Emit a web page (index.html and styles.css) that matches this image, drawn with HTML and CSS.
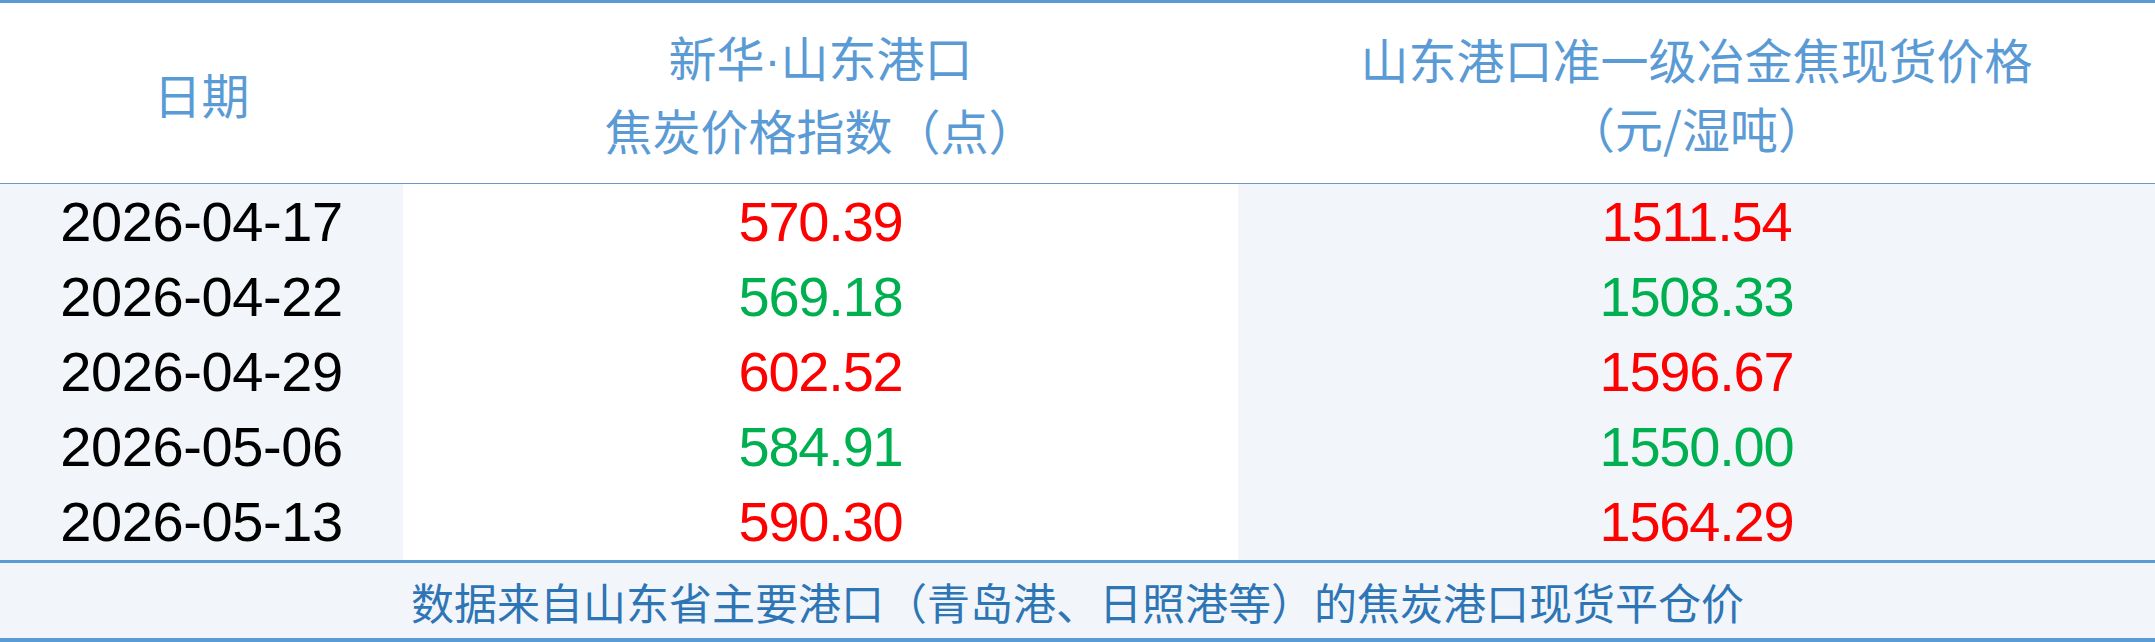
FILE: index.html
```html
<!DOCTYPE html>
<html lang="zh-CN">
<head>
<meta charset="utf-8">
<title>焦炭价格指数</title>
<link rel="stylesheet" href="styles.css">
</head>
<body>
<div class="sheet">
  <div class="head">
    <div class="hcell"><span>日期</span></div>
    <div class="hcell"><span>新华<span class="dot">·</span>山东港口</span><span>焦炭价格指数（点）</span></div>
    <div class="hcell"><span>山东港口准一级冶金焦现货价格</span><span>（元/湿吨）</span></div>
  </div>
  <div class="rows">
    <div class="row">
      <div class="cell date">2026-04-17</div>
      <div class="cell num up">570.39</div>
      <div class="cell num up shade">1511.54</div>
    </div>
    <div class="row">
      <div class="cell date">2026-04-22</div>
      <div class="cell num down">569.18</div>
      <div class="cell num down shade">1508.33</div>
    </div>
    <div class="row">
      <div class="cell date">2026-04-29</div>
      <div class="cell num up">602.52</div>
      <div class="cell num up shade">1596.67</div>
    </div>
    <div class="row">
      <div class="cell date">2026-05-06</div>
      <div class="cell num down">584.91</div>
      <div class="cell num down shade">1550.00</div>
    </div>
    <div class="row">
      <div class="cell date">2026-05-13</div>
      <div class="cell num up">590.30</div>
      <div class="cell num up shade">1564.29</div>
    </div>
  </div>
  <div class="foot">数据来自山东省主要港口（青岛港、日照港等）的焦炭港口现货平仓价</div>
</div>
</body>
</html>
```

FILE: styles.css
```css
html, body {
  margin: 0;
  padding: 0;
  background: #ffffff;
}

.sheet {
  width: 2155px;
  height: 642px;
  box-sizing: border-box;
  border-top: 3px solid #5b9bd5;
  border-bottom: 4px solid #5b9bd5;
  display: flex;
  flex-direction: column;
  font-family: "Noto Sans CJK SC", "Liberation Sans", sans-serif;
}

.head {
  height: 180px;
  display: grid;
  grid-template-columns: 403px 835px 1fr;
  border-bottom: 1px solid #6f97c6;
  background: #ffffff;
}

.hcell {
  display: flex;
  flex-direction: column;
  align-items: center;
  justify-content: center;
  color: #5b9bd5;
  font-size: 48px;
  line-height: 69px;
  white-space: nowrap;
}

.dot {
  font-family: "Liberation Sans", sans-serif;
}

.rows {
  height: 376px;
  display: grid;
  grid-template-rows: repeat(5, 1fr);
}

.row {
  display: grid;
  grid-template-columns: 403px 835px 1fr;
}

.cell {
  display: flex;
  align-items: center;
  justify-content: center;
  font-family: "Liberation Sans", "Noto Sans CJK SC", sans-serif;
  font-size: 56px;
  line-height: 1;
}

.num {
  letter-spacing: -1.2px;
}

.date {
  color: #000000;
  background: #f2f5fa;
  letter-spacing: -0.4px;
}

.shade {
  background: #f2f5fa;
}

.up {
  color: #ff0000;
}

.down {
  color: #00b050;
}

.foot {
  flex: 1;
  border-top: 3px solid #5b9bd5;
  background: #f2f5fa;
  color: #2e75b6;
  font-size: 43px;
  display: flex;
  align-items: center;
  justify-content: center;
  white-space: nowrap;
}
```
